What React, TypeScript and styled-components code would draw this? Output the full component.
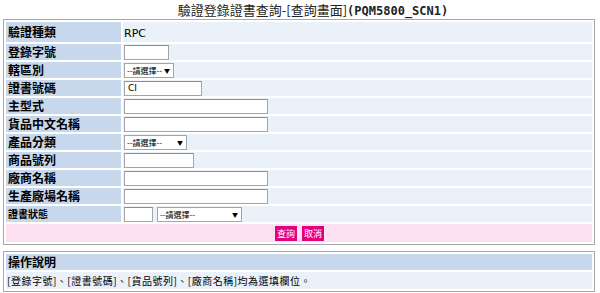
import React from 'react'
import styled, { createGlobalStyle } from 'styled-components'

const GlobalStyle = createGlobalStyle`
  body {
    margin: 0;
    background: #ffffff;
    font-family: 'Noto Sans CJK TC', 'DejaVu Sans', sans-serif;
    color: #000;
  }
`

const fields: { label: string; kind: 'text' | 'input' | 'select' | 'status'; width?: number; value?: string }[] = [
  { label: '驗證種類', kind: 'text', value: 'RPC' },
  { label: '登錄字號', kind: 'input', width: 45 },
  { label: '轄區別', kind: 'select', width: 50 },
  { label: '證書號碼', kind: 'input', width: 78, value: 'CI' },
  { label: '主型式', kind: 'input', width: 144 },
  { label: '貨品中文名稱', kind: 'input', width: 144 },
  { label: '產品分類', kind: 'select', width: 63 },
  { label: '商品號列', kind: 'input', width: 70 },
  { label: '廠商名稱', kind: 'input', width: 144 },
  { label: '生產廠場名稱', kind: 'input', width: 144 },
  { label: '證書狀態', kind: 'status' },
]

export default function App() {
  return (
    <Page>
      <GlobalStyle />
      <Title>
        驗證登錄證書查詢-[查詢畫面]<Code>(PQM5800_SCN1)</Code>
      </Title>

      <Table>
        <tbody>
          {fields.map(f => (
            <tr key={f.label}>
              <Label small={f.kind === 'status'}>{f.label}</Label>
              <Value>
                {f.kind === 'text' && <Plain>{f.value}</Plain>}
                {f.kind === 'input' && <Input w={f.width!} defaultValue={f.value} />}
                {f.kind === 'select' && <Select w={f.width!} />}
                {f.kind === 'status' && (
                  <Inline>
                    <Input w={29} />
                    <Select w={85} />
                  </Inline>
                )}
              </Value>
            </tr>
          ))}
          <tr>
            <ActionCell colSpan={2}>
              <Actions>
                <Button type="button">查詢</Button>
                <Button type="button">取消</Button>
              </Actions>
            </ActionCell>
          </tr>
        </tbody>
      </Table>

      <NoteTable>
        <tbody>
          <tr>
            <NoteHead>操作說明</NoteHead>
          </tr>
          <tr>
            <NoteBody>[登錄字號]、[證書號碼]、[貨品號列]、[廠商名稱]均為選填欄位。</NoteBody>
          </tr>
        </tbody>
      </NoteTable>
    </Page>
  )
}

function Select({ w }: { w: number }) {
  return (
    <SelectBox w={w}>
      <span>--請選擇--</span>
      <Arrow>▼</Arrow>
    </SelectBox>
  )
}

const Page = styled.div`
  width: 600px;
  height: 293px;
  padding: 0 5px 0 3px;
  box-sizing: border-box;
  overflow: hidden;
`

const Title = styled.div`
  height: 19px;
  line-height: 19px;
  padding-left: 28px;
  text-align: center;
  font-size: 13px;
  color: #222;
`

const Code = styled.span`
  font-family: 'DejaVu Sans Mono', monospace;
  font-weight: bold;
  font-size: 12px;
`

const Table = styled.table`
  width: 100%;
  border: 1px solid #a8a8a8;
  border-spacing: 2px;
  border-collapse: separate;
`

const Label = styled.td<{ small?: boolean }>`
  width: 113px;
  height: 16px;
  padding: 0 0 0 2px;
  background: #c7d8ec;
  font-size: ${p => (p.small ? 10 : 12)}px;
  font-weight: bold;
  line-height: 16px;
  white-space: nowrap;
`

const Value = styled.td`
  height: 16px;
  padding: 0 0 0 1px;
  background: #eaf1f9;
  line-height: 16px;
`

const Plain = styled.span`
  font-family: 'DejaVu Sans', sans-serif;
  font-size: 11px;
`

const Inline = styled.div`
  display: flex;
  align-items: center;
  gap: 4px;
`

const Input = styled.input<{ w: number }>`
  display: block;
  width: ${p => p.w}px;
  height: 15px;
  box-sizing: border-box;
  margin: 0;
  padding: 0 3px;
  border: 1px solid #a5a5a5;
  border-top-color: #8d8d8d;
  background: #fff;
  font-family: 'DejaVu Sans', sans-serif;
  font-size: 9px;
  outline: none;
`

const SelectBox = styled.div<{ w: number }>`
  display: flex;
  align-items: center;
  justify-content: space-between;
  width: ${p => p.w}px;
  height: 15px;
  box-sizing: border-box;
  padding: 0 3px 0 2px;
  border: 1px solid #a5a5a5;
  background: #fff;
  font-size: 8px;
  line-height: 13px;
  white-space: nowrap;
`

const Arrow = styled.span`
  font-size: 6px;
`

const ActionCell = styled.td`
  height: 18px;
  padding: 0;
  background: #fde1f0;
`

const Actions = styled.div`
  display: flex;
  justify-content: center;
  gap: 5px;
  padding-left: 1px;
`

const Button = styled.button`
  height: 15px;
  margin: 0;
  padding: 0 2px;
  border: none;
  background: #e4007f;
  color: #fff;
  font-family: 'Noto Sans CJK TC', sans-serif;
  font-size: 9px;
  line-height: 15px;
`

const NoteTable = styled(Table)`
  margin-top: 6px;
`

const NoteHead = styled.td`
  height: 16px;
  padding: 0 0 0 2px;
  background: #c7d8ec;
  font-size: 12px;
  font-weight: bold;
  line-height: 16px;
`

const NoteBody = styled.td`
  height: 17px;
  padding: 0 0 0 1px;
  background: #eaf1f9;
  font-size: 10px;
  line-height: 17px;
  letter-spacing: 0.5px;
`
